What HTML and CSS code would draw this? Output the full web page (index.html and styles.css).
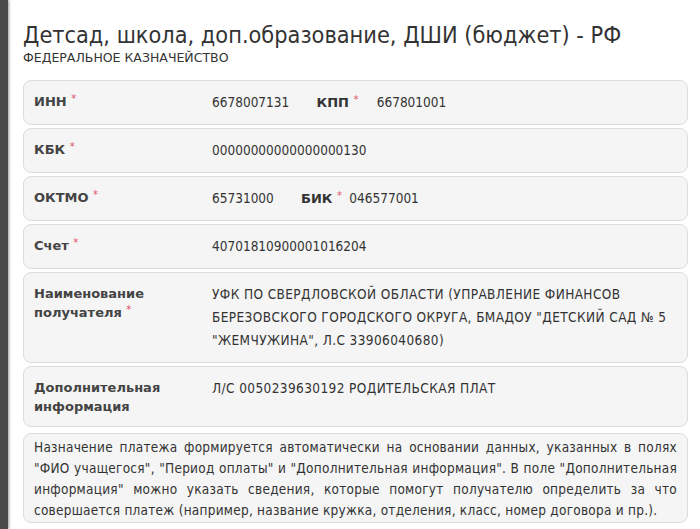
FILE: index.html
```html
<!DOCTYPE html>
<html lang="ru">
<head>
    <meta charset="UTF-8">
    <meta name="viewport" content="width=device-width, initial-scale=1.0">
    <title>Реквизиты</title>
    <link rel="stylesheet" href="styles.css">
</head>
<body>
    <div class="page">
        <div class="backdrop"></div>

        <div class="modal">
            <h2 class="title">Детсад, школа, доп.образование, ДШИ (бюджет) - РФ</h2>
            <div class="subtitle">ФЕДЕРАЛЬНОЕ КАЗНАЧЕЙСТВО</div>

            <div class="fields">
                <div class="field">
                    <div class="label">ИНН <sup class="req">*</sup></div>
                    <div class="value">
                        <span class="num">6678007131</span>
                        <span class="inline-label">КПП <sup class="req">*</sup></span>
                        <span class="num after-kpp">667801001</span>
                    </div>
                </div>

                <div class="field">
                    <div class="label">КБК <sup class="req">*</sup></div>
                    <div class="value num">00000000000000000130</div>
                </div>

                <div class="field">
                    <div class="label">ОКТМО <sup class="req">*</sup></div>
                    <div class="value">
                        <span class="num">65731000</span>
                        <span class="inline-label">БИК <sup class="req">*</sup></span>
                        <span class="num">046577001</span>
                    </div>
                </div>

                <div class="field">
                    <div class="label">Счет <sup class="req">*</sup></div>
                    <div class="value num">40701810900001016204</div>
                </div>

                <div class="field">
                    <div class="label">Наименование получателя <sup class="req">*</sup></div>
                    <div class="value">УФК ПО СВЕРДЛОВСКОЙ ОБЛАСТИ (УПРАВЛЕНИЕ ФИНАНСОВ БЕРЕЗОВСКОГО ГОРОДСКОГО ОКРУГА, БМАДОУ "ДЕТСКИЙ САД № 5 "ЖЕМЧУЖИНА", Л.С 33906040680)</div>
                </div>

                <div class="field">
                    <div class="label">Дополнительная информация</div>
                    <div class="value">Л/С 0050239630192 РОДИТЕЛЬСКАЯ ПЛАТ</div>
                </div>

                <div class="field note">
                    Назначение платежа формируется автоматически на основании данных, указанных в полях "ФИО учащегося", "Период оплаты" и "Дополнительная информация". В поле "Дополнительная информация" можно указать сведения, которые помогут получателю определить за что совершается платеж (например, название кружка, отделения, класс, номер договора и пр.).
                </div>
            </div>
        </div>
    </div>
</body>
</html>
```

FILE: styles.css
```css
* {
    margin: 0;
    padding: 0;
    box-sizing: border-box;
}

body {
    font-family: "DejaVu Sans", sans-serif;
    font-stretch: condensed;
    font-size: 13px;
    color: #333;
    background: #fff;
    overflow: hidden;
}

.page {
    display: flex;
    min-height: 529px;
}

.backdrop {
    width: 8px;
    flex-shrink: 0;
    background: #4a4a4a;
    box-shadow: 1px 0 3px rgba(0, 0, 0, 0.4);
}

.modal {
    flex: 1;
    padding: 21px 12px 0 15px;
}

.title {
    font-size: 23.3px;
    font-weight: normal;
    line-height: 28px;
    color: #333;
}

.subtitle {
    font-size: 12.5px;
    font-stretch: normal;
    line-height: 17px;
    color: #333;
}

.fields {
    display: flex;
    flex-direction: column;
    gap: 3px;
    margin-top: 14px;
}

.field {
    display: flex;
    padding: 10px;
    background: #f5f5f5;
    border: 1px solid #dcdcdc;
    border-radius: 8px;
}

.label {
    width: 178px;
    flex-shrink: 0;
    font-weight: bold;
    font-stretch: normal;
    line-height: 19px;
    padding-top: 1px;
    padding-right: 30px;
    color: #444;
}

.value {
    flex: 1;
    font-size: 13.5px;
    letter-spacing: 0.4px;
    line-height: 23px;
}

.num {
    letter-spacing: 0;
}

.req {
    color: #e0506a;
    font-size: 10px;
    font-weight: normal;
    letter-spacing: 0;
    vertical-align: top;
    position: relative;
    top: -3px;
}

.inline-label {
    font-weight: bold;
    font-size: 13px;
    font-stretch: normal;
    letter-spacing: 0;
    margin-left: 23px;
    margin-right: 3px;
}

.after-kpp {
    margin-left: 11px;
}

.note {
    display: block;
    margin-top: 3px;
    padding: 3px 10px 1px;
    font-size: 13.5px;
    letter-spacing: 0.25px;
    line-height: 21px;
    text-align: justify;
}
```
